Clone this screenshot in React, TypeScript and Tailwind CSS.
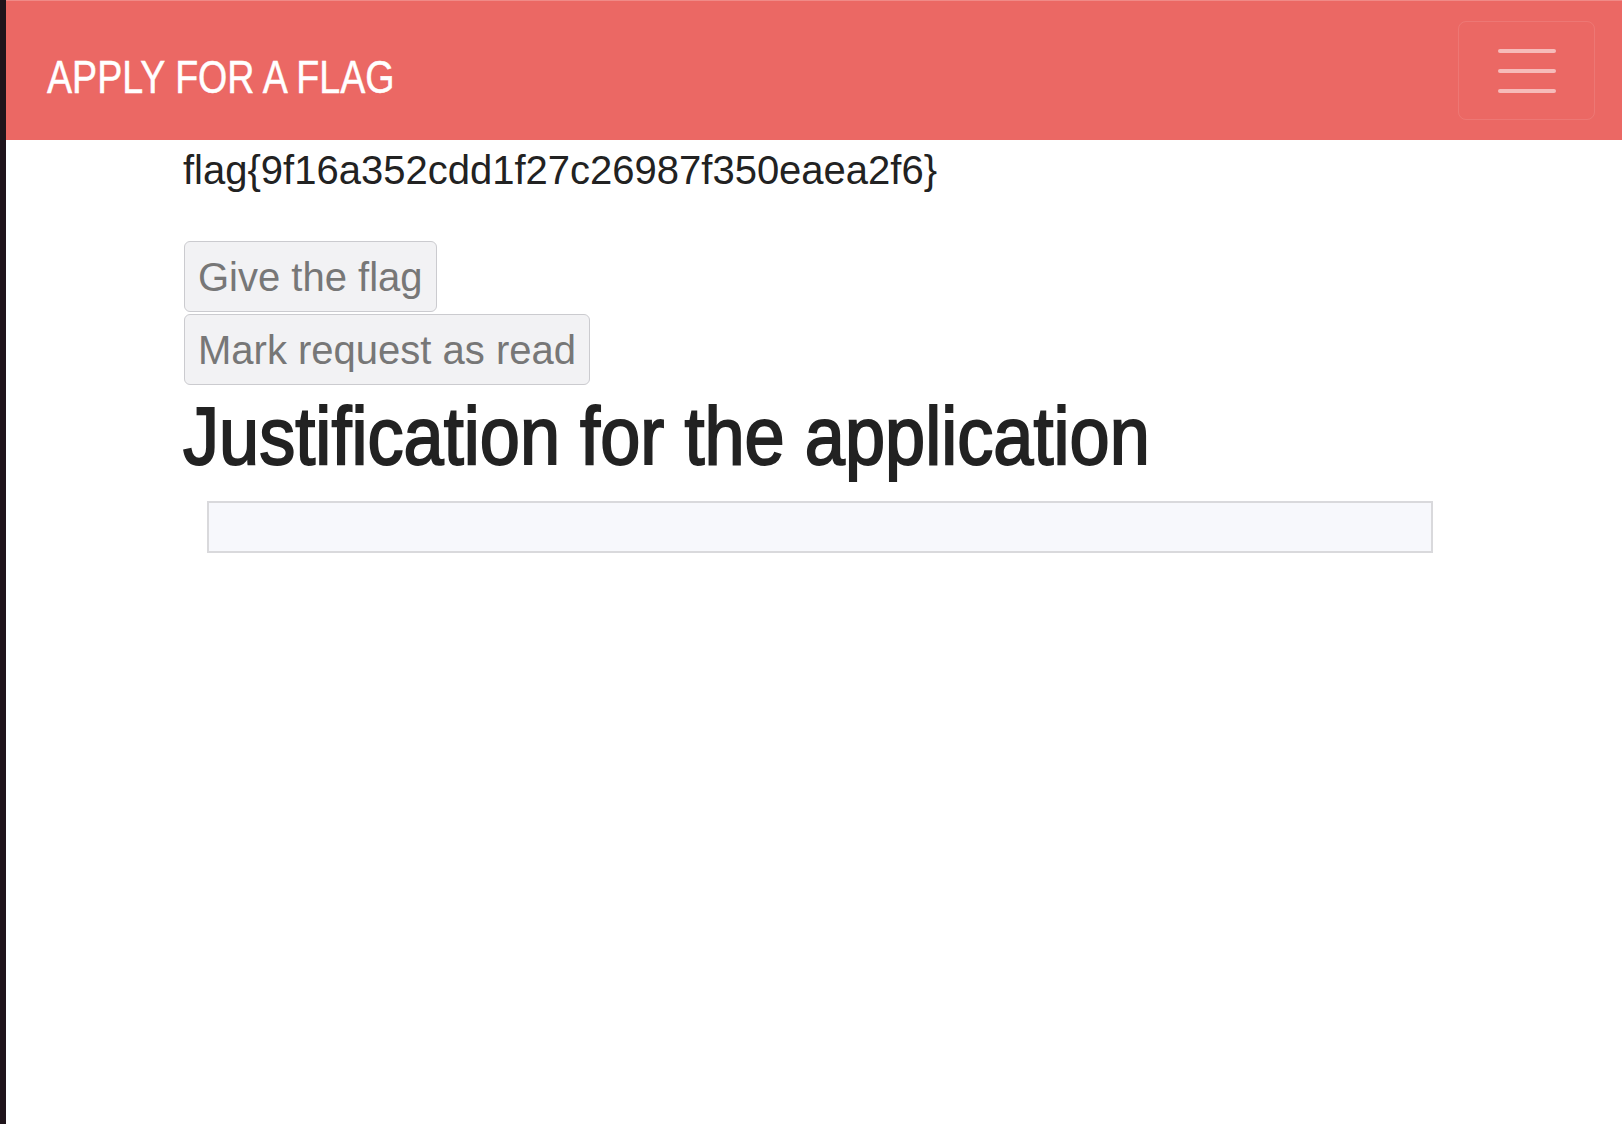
import { useState } from 'react'

const sans = '"Liberation Sans", Arial, sans-serif'

export default function App() {
  const [justification, setJustification] = useState('')

  return (
    <div className="flex min-h-screen w-full bg-white">
      {/* Left edge strip */}
      <div className="w-[6px] shrink-0 bg-[#1f141b]" />

      <div className="flex flex-1 flex-col">
        {/* Navbar */}
        <nav
          className="flex h-[140px] items-start justify-between border-t border-[#f08a87] bg-[#eb6864] pl-[41px] pr-[27px]"
          style={{ fontFamily: sans }}
        >
          <a
            href="#"
            className="mt-[53px] inline-block origin-left scale-x-[0.817] whitespace-nowrap text-[46px] leading-none text-white [-webkit-text-stroke:0.5px_#ffffff]"
          >
            APPLY FOR A FLAG
          </a>
          <button
            type="button"
            className="mt-[20px] flex h-[99px] w-[137px] flex-col items-center justify-center gap-[16px] rounded-[8px] border border-white/10"
          >
            <span className="block h-[4px] w-[58px] rounded-full bg-white/55" />
            <span className="block h-[4px] w-[58px] rounded-full bg-white/55" />
            <span className="block h-[4px] w-[58px] rounded-full bg-white/55" />
          </button>
        </nav>

        {/* Content */}
        <main className="flex flex-col items-start pl-[178px]" style={{ fontFamily: sans }}>
          <p className="mt-[6px] -ml-px text-[40px] leading-[48px] text-[#222222]">
            flag{'{'}9f16a352cdd1f27c26987f350eaea2f6{'}'}
          </p>

          <div className="mt-[47px] flex flex-col items-start gap-[2px]">
            <button
              type="button"
              className="flex h-[71px] items-center rounded-[6px] border border-[#cbcbcf] bg-[#f2f2f4] px-[13px] text-[40px] leading-[48px] text-[#777777]"
            >
              Give the flag
            </button>
            <button
              type="button"
              className="flex h-[71px] items-center rounded-[6px] border border-[#cbcbcf] bg-[#f2f2f4] px-[13px] text-[40px] leading-[48px] text-[#777777]"
            >
              Mark request as read
            </button>
          </div>

          <h2 className="-ml-px mt-[7px] inline-block origin-left scale-x-[0.891] whitespace-nowrap text-[81px] leading-[1.1] text-[#222222] [-webkit-text-stroke:2px_#222222]">
            Justification for the application
          </h2>

          <textarea
            value={justification}
            onChange={(e) => setJustification(e.target.value)}
            rows={1}
            className="ml-[23px] mt-[20px] h-[52px] w-[1226px] resize-none border-2 border-[#d9d9dc] bg-[#f7f8fc] px-3 text-[20px] outline-none"
          />
        </main>
      </div>
    </div>
  )
}
